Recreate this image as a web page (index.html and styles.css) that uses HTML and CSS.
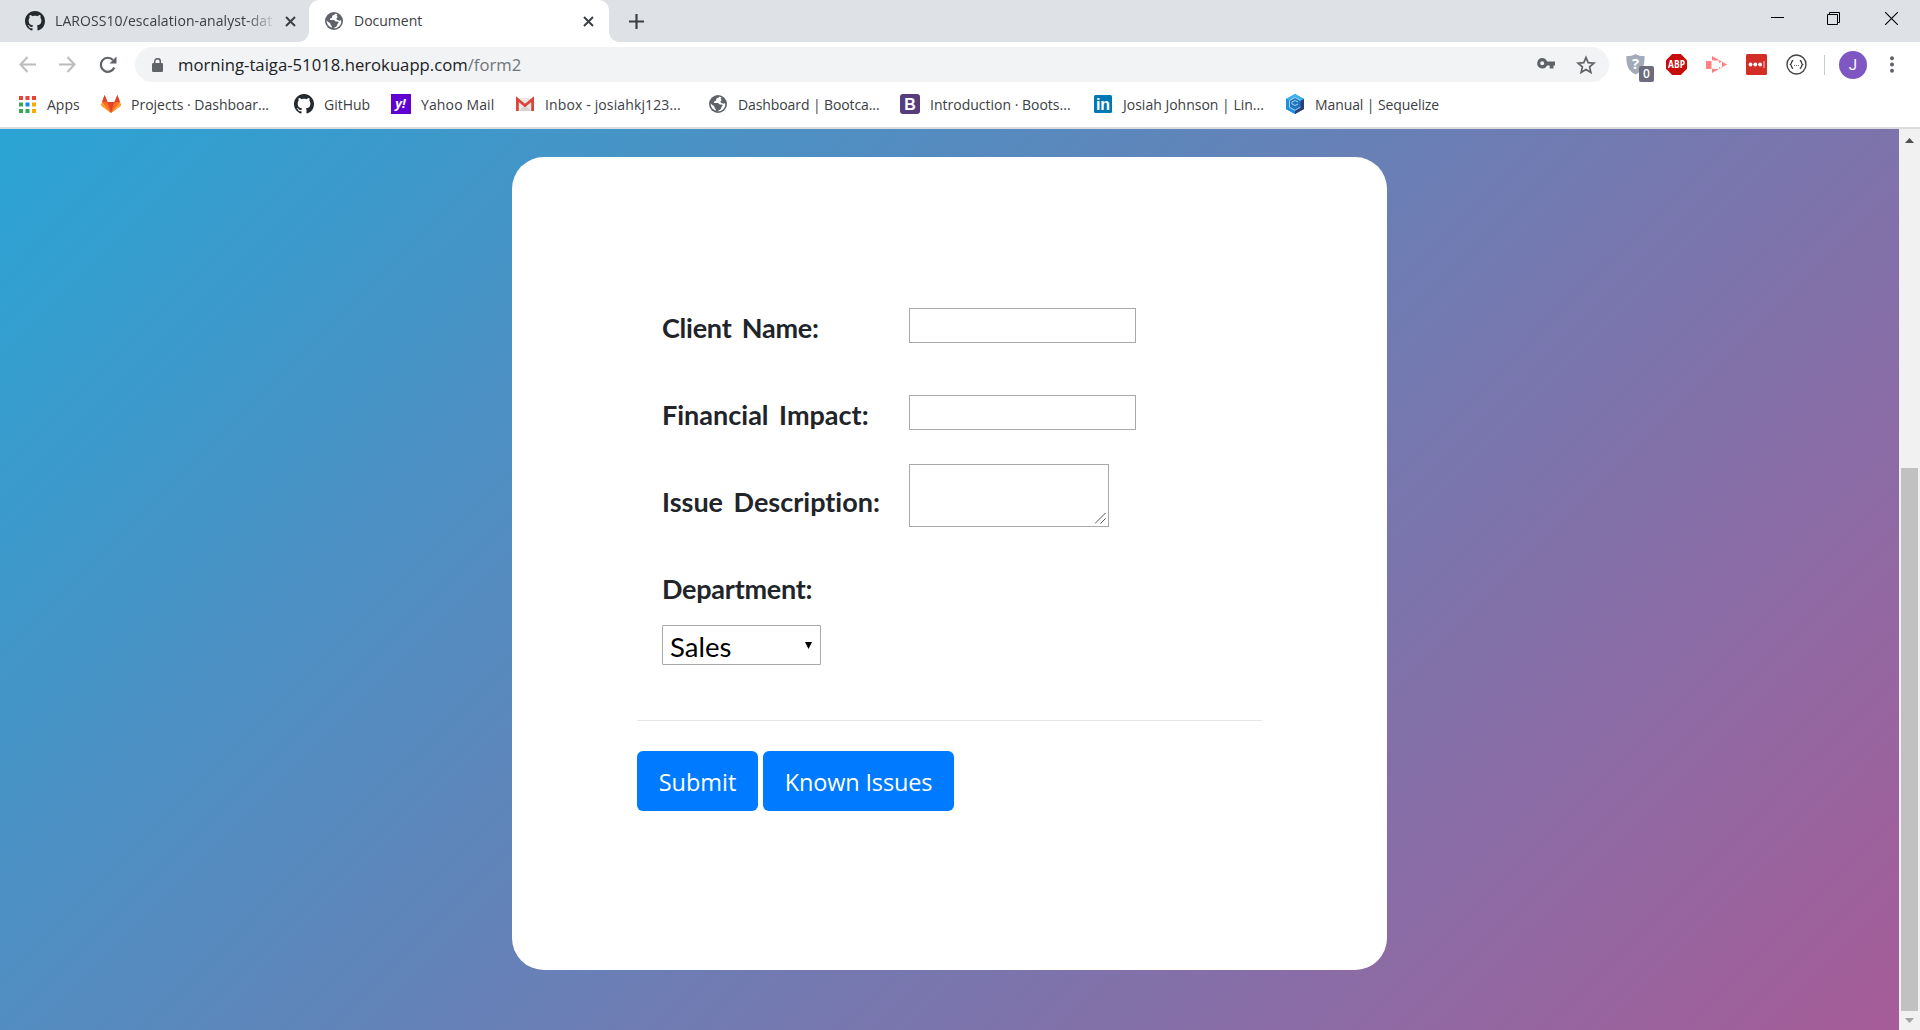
FILE: index.html
```html
<!DOCTYPE html>
<html lang="en">
<head>
<meta charset="utf-8">
<title>Document</title>
<link rel="stylesheet" href="styles.css">
</head>
<body>
<svg class="defs" width="0" height="0">
  <symbol id="github" viewBox="0 0 16 16"><path fill="#24292e" d="M8 0C3.58 0 0 3.58 0 8c0 3.54 2.29 6.53 5.47 7.59.4.07.55-.17.55-.38 0-.19-.01-.82-.01-1.49-2.01.37-2.53-.49-2.69-.94-.09-.23-.48-.94-.82-1.13-.28-.15-.68-.52-.01-.53.63-.01 1.08.58 1.23.82.72 1.21 1.87.87 2.33.66.07-.52.28-.87.51-1.07-1.78-.2-3.64-.89-3.64-3.95 0-.87.31-1.59.82-2.15-.08-.2-.36-1.02.08-2.12 0 0 .67-.21 2.2.82.64-.18 1.32-.27 2-.27s1.36.09 2 .27c1.53-1.04 2.2-.82 2.2-.82.44 1.1.16 1.92.08 2.12.51.56.82 1.27.82 2.15 0 3.07-1.87 3.75-3.65 3.95.29.25.54.73.54 1.48 0 1.07-.01 1.93-.01 2.2 0 .21.15.46.55.38A8.01 8.01 0 0 0 16 8c0-4.42-3.58-8-8-8z"/></symbol>
  <symbol id="globe" viewBox="0 0 18 18"><circle cx="9" cy="9" r="9" fill="#5f6368"/><path fill="#fff" d="M10.3 1.8C9.6 3 8 3.1 7.4 3.700c-.8.9.2 1.300-.5 2.100-.7.7-1.600.3-2 1.200-.2.800.5 1.100 1.400 1.100h2.500c1 0 1.100 1.200 1.900 1.400 1.200.3 2.600-.2 2.900.8.200 1-1 1.200-1.300 2.200-.3 1-.6 1.900-1.700 2.500l-2.300 1.300c3.700.5 7.300-2 7.900-6 .1-.9 0-1.600-.2-2.300-.7.900-2 .9-2.800.2-.6-.6-1.600-.3-1.800-1.200-.2-.9.900-1 1.100-1.800.2-.9-1-1.100-.8-2 .1-.500.500-.8.900-1zM1.700 8.300c-.3 3.400 1.900 6.500 5.300 7.300.1-1-.2-1.700-.9-2.200-.8-.6-.3-1.500-1-2.200C4 10.200 2.500 9.800 1.700 8.300z"/></symbol>
</svg>
<div class="browser">
  <header class="tabs">
    <div class="tab">
      <svg class="fav" width="20" height="20"><use href="#github"/></svg>
      <span class="tab-title tab-title-fade">LAROSS10/escalation-analyst-dat</span>
      <svg class="tab-x" width="11" height="11" viewBox="0 0 11 11"><path d="M1 1l9 9M10 1l-9 9" stroke="#3c4043" stroke-width="2"/></svg>
    </div>
    <div class="tab active">
      <svg class="fav" width="18" height="18"><use href="#globe"/></svg>
      <span class="tab-title">Document</span>
      <svg class="tab-x" width="11" height="11" viewBox="0 0 11 11"><path d="M1 1l9 9M10 1l-9 9" stroke="#3c4043" stroke-width="2"/></svg>
    </div>
    <svg class="plus" width="15" height="15" viewBox="0 0 15 15"><path d="M7.500 0v15M0 7.500h15" stroke="#3c4043" stroke-width="2.200"/></svg>
    <div class="win">
      <svg width="13" height="13"><path d="M0 5.500h13" stroke="#000"/></svg>
      <svg width="13" height="13"><path d="M.5 2.500h10v10h-10zM2.500 2.500v-2h10v10h-2" fill="none" stroke="#000"/></svg>
      <svg width="13" height="13"><path d="M0 0l13 13M13 0L0 13" stroke="#000" stroke-width="1.100"/></svg>
    </div>
  </header>

  <div class="toolbar">
    <div class="nav">
      <svg width="17" height="17" viewBox="0 0 17 17"><path d="M17 8.500H2M8.500 1L1.500 8.500l7 7.500" fill="none" stroke="#babcbe" stroke-width="2"/></svg>
      <svg width="17" height="17" viewBox="0 0 17 17"><path d="M0 8.500h15M8.500 1l7 7.500-7 7.500" fill="none" stroke="#babcbe" stroke-width="2"/></svg>
      <svg width="18" height="18" viewBox="0 0 18 18"><path d="M15.300 11.500A7 7 0 1 1 14 4" fill="none" stroke="#5f6368" stroke-width="2.200"/><path d="M17.500 .5v7h-7z" fill="#5f6368"/></svg>
    </div>
    <div class="omnibox">
      <svg width="11" height="14" viewBox="0 0 11 14"><rect y="5" width="11" height="9" rx="1.200" fill="#5f6368"/><path d="M2.700 6V3.500a2.800 2.800 0 0 1 5.600 0V6" fill="none" stroke="#5f6368" stroke-width="1.500"/></svg>
      <span class="url">morning-taiga-51018.herokuapp.com<span class="path">/form2</span></span>
      <svg class="key" width="18" height="11" viewBox="0 0 18 11"><path fill="#5f6368" fill-rule="evenodd" d="M5.200 0a5.200 5.200 0 0 1 4.900 3.500H18v4h-1.500v3h-3.800v-3h-2.600A5.200 5.200 0 1 1 5.200 0zm0 3.300a2 2 0 1 0 0 4 2 2 0 0 0 0-4z"/></svg>
      <svg class="star" width="20" height="20" viewBox="0 0 20 20"><path d="M10 2.500l2.200 5.200 5.700.5-4.300 3.700 1.300 5.600-4.900-3-4.900 3 1.300-5.600-4.300-3.700 5.700-.5z" fill="none" stroke="#5f6368" stroke-width="1.700"/></svg>
    </div>
    <div class="ext">
      <div class="shield">
        <svg width="19" height="21" viewBox="0 0 19 21"><path fill="#a3abb8" d="M9.500 0C12 1.700 15 2 18.500 2c.3 8-1 14.500-9 18.500C1.500 16.500 0 10 .5 2 4 2 7 1.700 9.500 0z"/><text class="glyph-q" x="9.500" y="15">?</text></svg>
        <span class="count">0</span>
      </div>
      <svg width="21" height="21" viewBox="0 0 21 21"><path fill="#c70d0c" d="M6.200 0h8.600L21 6.200v8.600L14.800 21H6.200L0 14.800V6.200z"/><text class="glyph-abp" x="10.500" y="14.200" textLength="17" lengthAdjust="spacingAndGlyphs">ABP</text></svg>
      <svg width="21" height="18" viewBox="0 0 21 18"><path fill="#ff8080" fill-rule="evenodd" d="M6 0l15 8.500L6 17v-4.200L9 13h4v-2l3 1.500v-7L13 7V4.500H9L6 4.200zM0 5h5.500v8H0z"/></svg>
      <svg width="21" height="21" viewBox="0 0 21 21"><rect width="21" height="21" rx="1.500" fill="#d32d27"/><circle cx="4.500" cy="10.500" r="1.900" fill="#fff"/><circle cx="9.300" cy="10.500" r="1.900" fill="#fff"/><circle cx="14.100" cy="10.500" r="1.900" fill="#fff"/><path d="M18 7v7" stroke="#fbd" stroke-width="1"/></svg>
      <svg width="21" height="21" viewBox="0 0 21 21"><circle cx="10.500" cy="10.500" r="9.500" fill="#fff" stroke="#444" stroke-width="1.400"/><path d="M7.200 6.500c-2 0-1.200 3-2.800 4 1.600 1 .8 4 2.800 4M13.800 6.500c2 0 1.200 3 2.800 4-1.600 1-.8 4-2.800 4" fill="none" stroke="#333" stroke-width="1.300"/><path d="M8 11.500h1M10 11.500h1M12 11.500h1" stroke="#777"/></svg>
    </div>
    <span class="divider"></span>
    <span class="avatar">J</span>
    <svg width="4" height="17" viewBox="0 0 4 17"><g fill="#5f6368"><circle cx="2" cy="2.200" r="2"/><circle cx="2" cy="8.500" r="2"/><circle cx="2" cy="14.800" r="2"/></g></svg>
  </div>

  <nav class="bookmarks">
    <a class="apps"><svg width="20" height="20" viewBox="0 0 20 20"><path fill="#ea4335" d="M1 2h4v4H1zM7.500 2h4v4h-4zM14 2h4v4h-4z"/><path fill="#34a853" d="M1 8.500h4v4H1zM1 15h4v4H1zM7.500 15h4v4h-4z"/><path fill="#1a87f0" d="M7.500 8.500h4v4h-4z"/><path fill="#fbab00" d="M14 8.500h4v4h-4zM14 15h4v4h-4z"/></svg>Apps</a>
    <a><svg width="20" height="20" viewBox="0 0 20 20"><path fill="#fc6d26" d="M3.600 1L0 11.500 10 19l10-7.500L16.400 1l-3 7H6.600z"/><path fill="#e24329" d="M6.600 8h6.800L10 19zM3.600 1L1 8h5.600zM16.400 1L19 8h-5.600z"/><path fill="#fca326" d="M1 8l-1 3.500L10 19zM19 8l1 3.500L10 19z"/></svg><span>Projects · Dashboar...</span></a>
    <a><svg width="20" height="20"><use href="#github"/></svg>GitHub</a>
    <a><svg width="20" height="20" viewBox="0 0 20 20"><path fill="#5f01d1" d="M0 0h20v20H0z"/><text class="glyph-y" x="9.500" y="14">y!</text></svg><span class="wide">Yahoo Mail</span></a>
    <a><svg width="20" height="20" viewBox="0 0 20 20"><path fill="#e8e8e8" d="M2 4h16v13H2z"/><path fill="#d3d3d3" d="M4 17l6-6 6 6z"/><path d="M2.400 17V5.200l7.600 6.300 7.600-6.300V17" fill="none" stroke="#d9453a" stroke-width="2.800"/></svg><span class="wide">Inbox - josiahkj123...</span></a>
    <a class="dash"><svg width="20" height="20" viewBox="-1 -1 20 20"><use href="#globe" width="18" height="18"/></svg><span class="snug">Dashboard | Bootca...</span></a>
    <a><svg width="20" height="20" viewBox="0 0 20 20"><rect width="20" height="20" rx="3" fill="#563d7c"/><text class="glyph-b" x="10" y="15.700">B</text></svg><span>Introduction · Boots...</span></a>
    <a><svg width="20" height="20" viewBox="-1 0 20 20"><rect y="1" width="18" height="18" rx="1.500" fill="#0077b5"/><text class="glyph-in" x="9" y="16">in</text></svg>Josiah Johnson | Lin...</a>
    <a><svg width="20" height="20" viewBox="-1 0 20 20"><path fill="#1d75bd" d="M9 0l9 5v10l-9 5-9-5V5z"/><path fill="#3bb4ee" d="M9 0l9 5-3 1.500L9 3.500 3 6.500 0 5z"/><path fill="#2b3f80" d="M18 5v10l-9 5v-4l5.500-3V7z"/><path fill="#1c92de" d="M0 5l3.500 2v6L9 16v4l-9-5z"/><path d="M14.500 6.700L9 3.500 3.500 6.700v6.500L9 16.300l5.500-3.200M12 8L9 6.500 6 8v2l3 1.500 3-1.500" fill="none" stroke="#cfe6f7" stroke-opacity=".8" stroke-width="1"/></svg><span class="snug">Manual | Sequelize</span></a>
  </nav>

  <main class="viewport">
    <section class="page">
      <form class="card">
        <div class="fields">
          <div class="row"><label class="close">Client Name:</label><input class="text" type="text"></div>
          <div class="row"><label>Financial Impact:</label><input class="text" type="text"></div>
          <div class="row"><label>Issue Description:</label>
            <div class="area"><svg width="11" height="11" viewBox="0 0 11 11"><path d="M0 10.500L10.500 0M5.500 10.500l5-5" stroke="#555" stroke-width="1"/></svg></div>
          </div>
          <div class="row row-last"><label class="close">Department:</label></div>
          <div class="select"><span>Sales</span><svg width="7" height="7" viewBox="0 0 7 7"><path d="M0 0h7L3.500 7z"/></svg></div>
        </div>
        <hr>
        <div class="actions"><button type="button">Submit</button><button type="button" class="known">Known Issues</button></div>
      </form>
    </section>
    <aside class="scroll">
      <svg width="9" height="5" viewBox="0 0 9 5"><path d="M0 5L4.500 0 9 5z" fill="#505050"/></svg>
      <span class="thumb"></span>
      <svg width="9" height="5" viewBox="0 0 9 5"><path d="M0 0l4.500 5L9 0z" fill="#a3a3a3"/></svg>
    </aside>
  </main>
</div>
</body>
</html>
```
FILE: styles.css
```css
* { box-sizing: border-box; }
body { margin: 0; font-family: "Segoe UI", "Open Sans", sans-serif; color: #3c4043; }
svg { display: block; flex: none; }
.defs { position: absolute; }
.browser { width: 1920px; height: 1030px; display: flex; flex-direction: column; overflow: hidden; background: #fff; }

/* tab strip */
.tabs { height: 42px; background: #dee1e6; display: flex; align-items: center; font-size: 14px; }
.tab { width: 309px; height: 42px; padding: 0 13px 0 25px; display: flex; align-items: center; }
.tab.active { position: relative; width: 300px; padding: 0 15px 0 16px; background: #fff; border-radius: 10px 10px 0 0; }
.tab.active::before, .tab.active::after { content: ""; position: absolute; bottom: 0; width: 10px; height: 10px; }
.tab.active::before { left: -10px; background: radial-gradient(circle at 0 0, transparent 9.500px, #fff 10px); }
.tab.active::after { right: -10px; background: radial-gradient(circle at 100% 0, transparent 9.500px, #fff 10px); }
.tab-title { margin-left: 11px; padding-bottom: 2px; flex: 1; white-space: nowrap; }
.tab-title-fade { margin-left: 10px; flex: none; width: 221px; letter-spacing: .08px; -webkit-mask-image: linear-gradient(90deg, #000 190px, transparent 222px); mask-image: linear-gradient(90deg, #000 190px, transparent 222px); }
.tab-title-fade + .tab-x { margin-left: 9px; }
.plus { margin-left: 20px; }
.win { margin-left: auto; padding-right: 22px; display: flex; gap: 43px; padding-bottom: 6px; }
.win svg:last-child { margin-left: 2px; }

/* toolbar */
.toolbar { height: 45px; display: flex; align-items: center; }
.nav { width: 135px; padding-left: 19px; display: flex; align-items: center; gap: 23px; }
.omnibox { width: 1474px; height: 35px; border-radius: 18px; background: #f1f3f4; display: flex; align-items: center; padding: 0 13px 0 17px; }
.url { margin-left: 15px; flex: 1; font-size: 16.700px; color: #202124; }
.path { color: #70757a; }
.key { margin-right: 21px; margin-top: -3px; }
.ext { margin-left: 17px; display: flex; align-items: center; gap: 19px; }
.shield { position: relative; width: 21px; }
.count { position: absolute; left: 13px; top: 12px; width: 15px; height: 16px; border-radius: 2px; background: #6c6c7c; color: #fff; font-size: 12px; font-weight: 600; line-height: 16px; text-align: center; }
.divider { margin-left: 17px; width: 1px; height: 20px; background: #c8cacd; }
.avatar { margin: 0 23px 0 14px; width: 28px; height: 28px; border-radius: 50%; background: #7e57c2; color: #fff; font: 15px/28px Roboto, sans-serif; text-align: center; }

.glyph-q, .glyph-abp, .glyph-y, .glyph-b, .glyph-in { fill: #fff; text-anchor: middle; font-weight: 700; }
.glyph-q { font-size: 15px; }
.glyph-abp { font-size: 10px; }
.glyph-y { font-size: 13px; font-style: italic; }
.glyph-b { font: 700 16px "Liberation Sans", sans-serif; }
.glyph-in { font: 700 16px "Liberation Sans", sans-serif; }

/* bookmarks */
.bookmarks { height: 42px; padding: 0 0 6px 19px; display: grid; grid-template-columns: 82px 193px 97px 124px 194px 191px 193px 192px 200px; align-items: center; border-bottom: 2px solid #dadce0; font-size: 14px; }
.bookmarks a { display: flex; align-items: center; gap: 10px; white-space: nowrap; }
.bookmarks .apps { gap: 9px; margin-left: -1px; }
.bookmarks .dash { margin-left: -1px; }
.snug { letter-spacing: -.1px; }
.wide { letter-spacing: .13px; }

/* page */
.viewport { flex: 1; display: flex; min-height: 0; }
.page { width: 1899px; padding: 28px 0 0 512px; background: linear-gradient(135deg, #2aa4d4, #a65c98); }
.card { width: 875px; height: 813px; padding: 125px; background: #fff; border-radius: 32px; }
.fields { padding-left: 25px; }
.row { height: 87px; display: grid; grid-template-columns: 247px 1fr; align-items: center; }
.row-last { height: 82px; padding-top: 5px; }
label { padding-top: 3px; font: 700 27px "Comic Sans MS", Lato, sans-serif; font-variant-ligatures: none; color: #212529; word-spacing: 4px; white-space: nowrap; }
.close { letter-spacing: -.25px; }
.text { width: 227px; height: 35px; border: 1px solid #a9a9a9; background: #fff; }
.area { width: 200px; height: 63px; margin-bottom: 8px; padding: 0 2px 2px 0; border: 1px solid #a9a9a9; display: flex; align-items: flex-end; justify-content: flex-end; }
.select { width: 159px; height: 40px; padding: 2px 8px 0 7px; border: 1px solid #a9a9a9; border-radius: 1px; display: flex; align-items: center; justify-content: space-between; font: 27.500px "Comic Sans MS", Lato, sans-serif; color: #000; }
.select svg { margin-top: -2px; }
hr { margin: 55px 0 30px; border: 0; border-top: 1px solid #e5e5e5; }
.actions { display: flex; gap: 5px; }
button { width: 121px; height: 60px; padding: 2px 0 0; border: 0; border-radius: 6px; background: #007bff; color: #fff; font: 23.500px "Segoe UI", "Open Sans", sans-serif; }
.known { width: 191px; letter-spacing: -.15px; }

/* scrollbar */
.scroll { width: 21px; background: #f1f1f1; display: flex; flex-direction: column; align-items: center; padding: 9px 0 7px; }
.thumb { width: 17px; height: 543px; margin: 325px 0 auto; background: #c1c1c1; }
```
